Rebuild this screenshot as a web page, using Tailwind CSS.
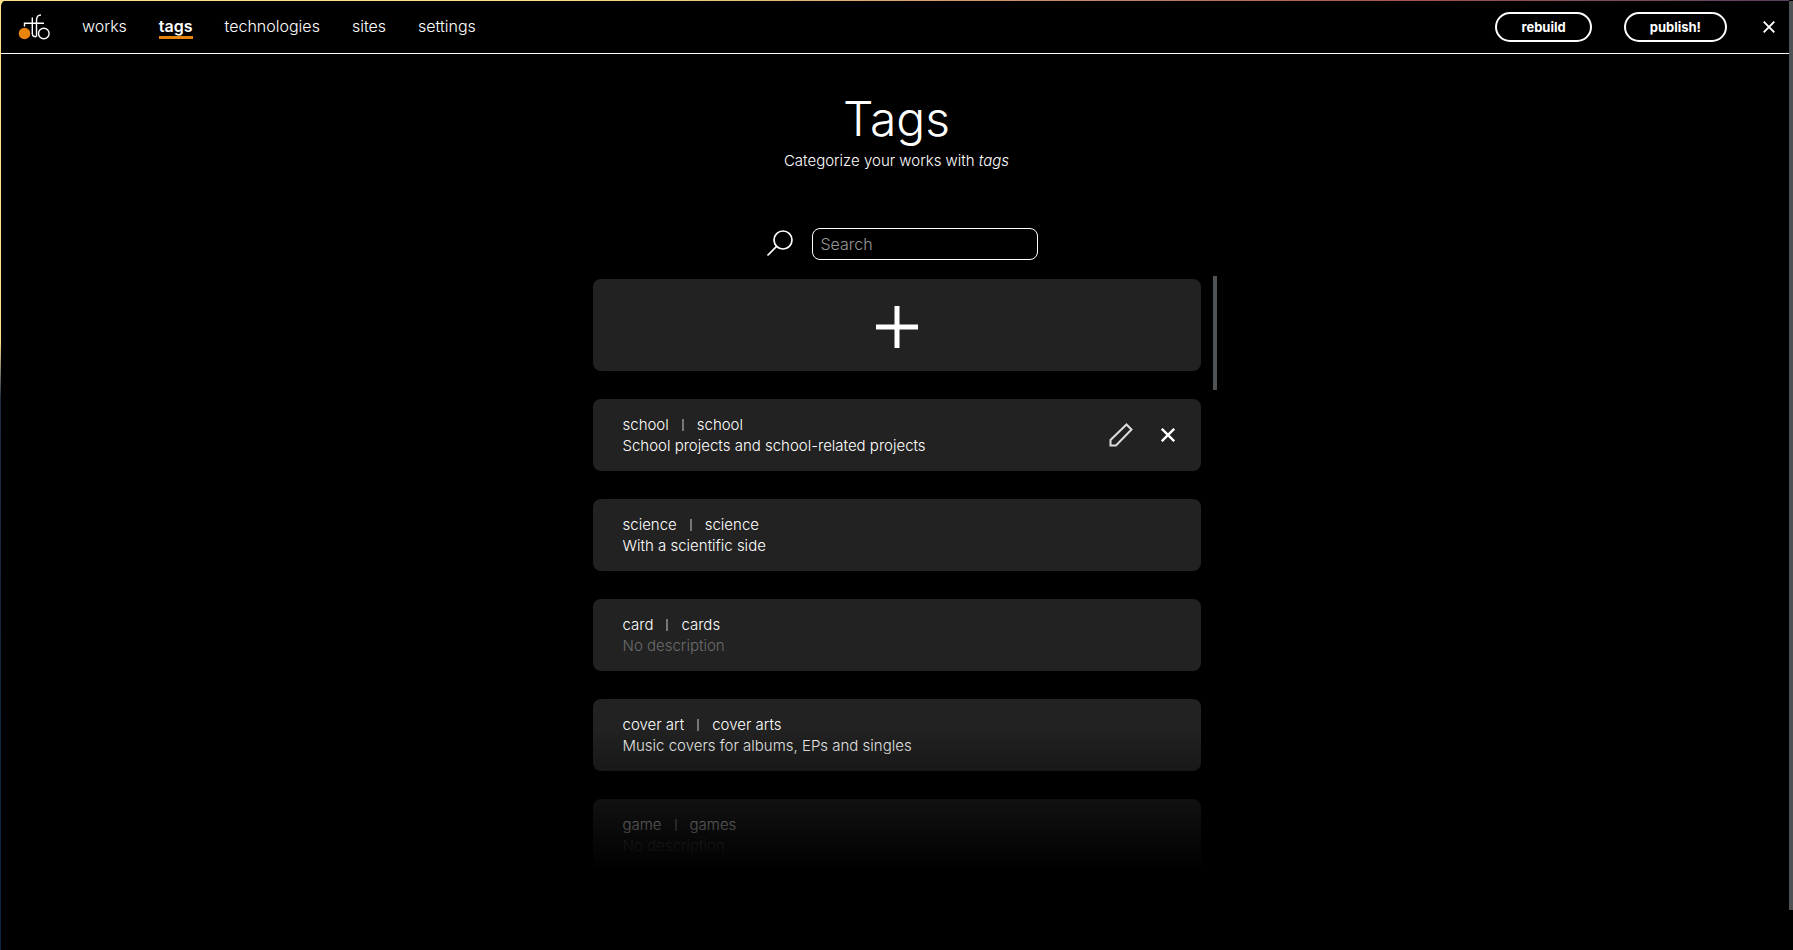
<!DOCTYPE html>
<html lang="en">
<head>
<meta charset="utf-8">
<title>Tags</title>
<script src="https://cdn.jsdelivr.net/npm/@tailwindcss/browser@4"></script>
</head>
<body class="min-h-screen bg-black font-['Inter','Noto_Sans',sans-serif] text-base font-light text-white">
<div class="flex min-h-screen bg-linear-to-b from-[#ffe08a] from-36% via-[#1b2b40] via-42% to-[#0a2340] pl-px">
  <div class="relative flex min-w-0 flex-1 flex-col rounded-tl-md bg-black">
    <div class="absolute top-0 -left-px right-0 h-px bg-linear-to-r from-[#ffe08a] from-30% via-[#a0524e] via-80% to-[#5a4060]"></div>
    <header class="flex h-[54px] items-center border-b border-white pl-[17px] pr-[10px]">
      <svg class="mr-8 h-7 w-8 shrink-0" viewBox="0 0 32 28" fill="none" stroke="#fff" stroke-width="1.400" role="img" aria-label="ortfo">
        <circle cx="6.500" cy="20.500" r="5.800" fill="#e8830c" stroke="none"/>
        <path d="M6.500 13.500V10.300H26M14.300 4.500V20.500C14.300 23 15.500 23.700 18 23.700M18.500 23.700V7.500C18.500 3.500 20 2 23 2"/>
        <circle cx="25.800" cy="20.500" r="5.300"/>
      </svg>
      <nav class="flex items-center gap-8 pb-0.5 leading-5">
        <a href="#works">works</a>
        <a href="#tags" class="border-b-3 border-[#e8830c] pt-1 font-semibold" aria-current="page">tags</a>
        <a href="#technologies">technologies</a>
        <a href="#sites">sites</a>
        <a href="#settings">settings</a>
      </nav>
      <div class="ml-auto flex items-center gap-8">
        <button class="h-[30px] rounded-full border-2 border-white px-6 pt-0.5 text-[13px] font-bold">rebuild</button>
        <button class="h-[30px] rounded-full border-2 border-white px-6 pt-0.5 text-[13px] font-bold">publish!</button>
        <button class="flex size-5 items-center justify-center" aria-label="Close">
          <svg class="size-3" viewBox="0 0 12 12" stroke="#fff" stroke-width="1.900"><path d="M.7.7 11.300 11.300M11.300.7.7 11.300"/></svg>
        </button>
      </div>
    </header>

    <main class="flex flex-1 flex-col items-center pl-[3px]">
      <h1 class="mt-[35px] text-5xl leading-[60px]">Tags</h1>
      <p class="text-[15px] leading-6">Categorize your works with <em>tags</em></p>
      <div class="mt-[55px] flex items-center gap-[18px] pl-[10px]">
        <label for="search" aria-label="Search tags">
          <svg class="size-7" viewBox="0 0 28 28" fill="none" stroke="#fff" stroke-width="1.700"><circle cx="17" cy="10" r="9"/><path d="M10.600 16.400 1.500 25.500"/></svg>
        </label>
        <input id="search" type="text" placeholder="Search" class="h-8 w-[226px] rounded-lg border border-white bg-black px-2 placeholder:text-[#999]">
      </div>

      <section class="relative mt-4 w-full max-w-[640px] px-4">
        <div class="absolute top-0 right-0 h-[114px] w-1 bg-[#505355]"></div>
        <ul class="flex flex-col gap-7 pt-[3px] text-[15px] leading-[21px]">
          <li>
            <button class="flex w-full items-center justify-center rounded-lg bg-[#222] pt-[27px] pb-[23px]" aria-label="Add tag">
              <svg class="size-[42px]" viewBox="0 0 42 42" stroke="#fff" stroke-width="5"><path d="M21 0V42M0 21H42"/></svg>
            </button>
          </li>
          <li class="flex items-center rounded-lg bg-[#222] px-[30px] py-[15px]">
            <div class="flex-1">
              <h2 class="flex items-center gap-[13px]"><span>school</span><span class="h-3 w-0.5 bg-[#777]"></span><span>school</span></h2>
              <p>School projects and school-related projects</p>
            </div>
            <button aria-label="Edit school"><svg class="size-6" viewBox="0 0 24 24" fill="none" stroke="#ddd" stroke-width="2"><path d="M1.500 22.500V17L17.500 1.500 22.500 6.500 7 22.500Z"/></svg></button>
            <button class="-mr-1 ml-7" aria-label="Delete school"><svg class="size-[14px]" viewBox="0 0 14 14" stroke="#fff" stroke-width="2.400"><path d="M.8.8 13.200 13.200M13.200.8.8 13.200"/></svg></button>
          </li>
          <li class="rounded-lg bg-[#222] px-[30px] py-[15px]">
            <h2 class="flex items-center gap-[13px]"><span>science</span><span class="h-3 w-0.5 bg-[#777]"></span><span>science</span></h2>
            <p>With a scientific side</p>
          </li>
          <li class="rounded-lg bg-[#222] px-[30px] py-[15px]">
            <h2 class="flex items-center gap-[13px]"><span>card</span><span class="h-3 w-0.5 bg-[#777]"></span><span>cards</span></h2>
            <p class="text-[#6c6c6c]">No description</p>
          </li>
          <li class="rounded-lg bg-[#222] px-[30px] py-[15px]">
            <h2 class="flex items-center gap-[13px]"><span>cover art</span><span class="h-3 w-0.5 bg-[#777]"></span><span>cover arts</span></h2>
            <p>Music covers for albums, EPs and singles</p>
          </li>
          <li class="rounded-lg bg-[#222] px-[30px] py-[15px]">
            <h2 class="flex items-center gap-[13px]"><span>game</span><span class="h-3 w-0.5 bg-[#777]"></span><span>games</span></h2>
            <p class="text-[#6c6c6c]">No description</p>
          </li>
        </ul>
        <div class="pointer-events-none absolute inset-x-0 bottom-0 h-[144px] bg-linear-to-b from-transparent to-black"></div>
      </section>
    </main>
  </div>
  <div class="w-1 shrink-0 bg-black pt-px"><div class="h-[909px] bg-[#505355]"></div></div>
</div>
</body>
</html>
